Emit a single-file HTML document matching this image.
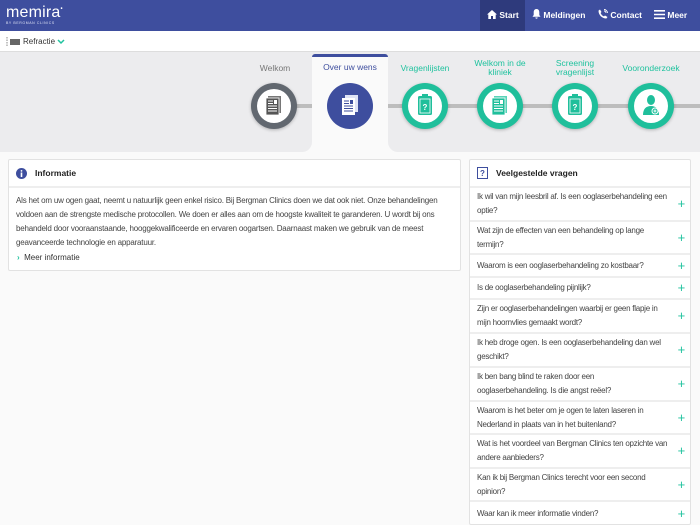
<!DOCTYPE html>
<html><head><meta charset="utf-8"><style>
*{box-sizing:border-box;margin:0;padding:0}
body{width:700px;height:525px;overflow:hidden;background:#fafafa;font-family:"Liberation Sans",sans-serif;color:#333;position:relative}
.hdr{position:absolute;left:0;top:0;width:700px;height:31px;background:#3e4e9e}
.logo{position:absolute;left:6px;top:4px;color:#fff;font-size:16px;letter-spacing:0.2px}
.logo small{position:absolute;left:0;top:17px;font-size:3.5px;letter-spacing:0.6px;white-space:nowrap;color:#dfe3f5}
.nav{position:absolute;top:0;height:31px;color:#fff;font-size:8.5px;font-weight:bold;line-height:31px;white-space:nowrap}
.sub{position:absolute;left:0;top:31px;width:700px;height:21px;background:#fff;border-bottom:1px solid #ddd;font-size:8px;line-height:21px}
.band{position:absolute;left:0;top:52px;width:700px;height:100px;background:#ececee}
.tab{position:absolute;left:312px;top:54px;width:76px;height:98px;background:#fafafa;border-top:3px solid #3e4e9e;border-radius:3px 3px 0 0}
.lbl{position:absolute;font-size:8.5px;text-align:center;width:80px;line-height:9px}
.c{position:absolute;width:46px;height:46px;border-radius:50%;top:83px;box-shadow:0 1px 3px rgba(0,0,0,.25)}
.c i{position:absolute;left:6px;top:6px;width:34px;height:34px;border-radius:50%;background:#fff}
.card{position:absolute;background:#fff;border:1px solid #e2e2e2;border-radius:2px}
.ch{height:28px;border-bottom:2px solid #eee;font-size:8.5px;font-weight:bold;line-height:27px;padding-left:26px;position:relative;color:#222}
.p{font-size:8px;letter-spacing:-0.2px;line-height:14px;color:#444;padding:6px 7px;white-space:nowrap}
.q{position:absolute;left:0;width:220px;border-bottom:2px solid #eee;font-size:8px;letter-spacing:-0.25px;line-height:14px;color:#444;padding-left:7px;white-space:nowrap;display:flex;align-items:center}
.q b{position:absolute;right:5px;color:#1fc29e;font-size:13px;font-weight:normal}
</style></head><body>
<div class="hdr">
 <div class="logo">memira<sup style="font-size:6px">•</sup><small>BY BERGMAN CLINICS</small></div>
 <div style="position:absolute;left:480px;top:0;width:45px;height:31px;background:#2e3a7c"></div>
 <div class="nav" style="left:487px"><svg width="10" height="9" viewBox="0 0 10 9" style="vertical-align:-1px"><path d="M5 0L0 4.5h1.3V9h2.7V6h2v3h2.7V4.5H10z" fill="#fff"/></svg> Start</div>
 <div class="nav" style="left:532px"><svg width="9" height="10" viewBox="0 0 9 10" style="vertical-align:-1px"><path d="M4.5 0C2.5 0 1.7 1.6 1.7 3.5V6L0.5 7.8h8L7.3 6V3.5C7.3 1.6 6.5 0 4.5 0zM3.3 8.5a1.2 1.2 0 0 0 2.4 0z" fill="#fff"/></svg> Meldingen</div>
 <div class="nav" style="left:598px"><svg width="10" height="10" viewBox="0 0 10 10" style="vertical-align:-1px"><path d="M2 0.5L3.5 3 2.6 4a6 6 0 0 0 3.4 3.4l1-.9L9.5 8 8.4 9.5C4 9.5.5 6 .5 1.6z" fill="#fff"/><path d="M6 .5a3.5 3.5 0 0 1 3.5 3.5M6 2a2 2 0 0 1 2 2" stroke="#fff" fill="none" stroke-width=".9"/></svg> Contact</div>
 <div class="nav" style="left:654px"><svg width="11" height="9" viewBox="0 0 11 9" style="vertical-align:-1px"><path d="M0 .8h11M0 4.5h11M0 8.2h11" stroke="#fff" stroke-width="1.6"/></svg> Meer</div>
</div>
<div class="sub"><svg width="14" height="10" viewBox="0 0 14 10" style="position:absolute;left:6px;top:6px"><path d="M1 0v10" stroke="#888" stroke-dasharray="1.5 1"/><rect x="4" y="2" width="10" height="6" fill="#666"/></svg><span style="position:absolute;left:23px">Refractie</span><svg width="8" height="6" style="position:absolute;left:57px;top:8px"><path d="M1 1l3 3 3-3" stroke="#1fc29e" stroke-width="1.5" fill="none"/></svg></div>
<div class="band"></div>
<div style="position:absolute;left:270px;top:104px;width:430px;height:4px;background:#bdbdbd"></div>
<div style="position:absolute;left:0;top:152px;width:700px;height:373px;background:#fafafa"></div>
<div style="position:absolute;left:300px;top:140px;width:12px;height:12px;background:#fafafa"></div>
<div style="position:absolute;left:388px;top:140px;width:12px;height:12px;background:#fafafa"></div>
<div style="position:absolute;left:388px;top:140px;width:12px;height:12px;background:#ececee;border-bottom-left-radius:10px"></div>
<div style="position:absolute;left:300px;top:140px;width:12px;height:12px;background:#ececee;border-bottom-right-radius:10px"></div>
<div class="tab"></div>

<div class="lbl" style="left:235px;top:64px;color:#777">Welkom</div>
<div class="lbl" style="left:310px;top:63px;color:#3e4e9e">Over uw wens</div>
<div class="lbl" style="left:385px;top:64px;color:#1fc29e">Vragenlijsten</div>
<div class="lbl" style="left:460px;top:59px;color:#1fc29e">Welkom in de<br>kliniek</div>
<div class="lbl" style="left:535px;top:59px;color:#1fc29e">Screening<br>vragenlijst</div>
<div class="lbl" style="left:611px;top:64px;color:#1fc29e">Vooronderzoek</div>

<div class="c" style="left:251px;background:#626870"><i></i><svg style="position:absolute;left:14px;top:13px" width="18" height="20" viewBox="0 0 18 20"><rect x="3" y="0" width="13" height="17" fill="#777"/><rect x="1" y="2" width="13" height="17" fill="#555" stroke="#fff" stroke-width=".8"/><path d="M3 5h5M3 7.5h5M3 10h9M3 12.5h9M3 15h9" stroke="#fff" stroke-width="1"/><rect x="9" y="4" width="3" height="4" fill="#fff"/></svg></div>
<div class="c" style="left:327px;background:#3e4e9e;box-shadow:none"><svg style="position:absolute;left:14px;top:12px" width="18" height="21" viewBox="0 0 18 21"><rect x="4" y="0" width="13" height="17" fill="#dfe3f5"/><rect x="1" y="3" width="13" height="17" fill="#fff"/><path d="M3 6h5M3 8.5h5M3 11h9M3 13.5h9M3 16h9" stroke="#3e4e9e" stroke-width="1"/><rect x="9" y="5" width="3" height="4" fill="#3e4e9e"/></svg></div>
<div class="c" style="left:402px;background:#1fbf9b"><i></i><svg style="position:absolute;left:15px;top:11px" width="16" height="22" viewBox="0 0 16 22"><rect x="1" y="2" width="14" height="19" rx="1.5" fill="#1fbf9b"/><rect x="5" y="0" width="6" height="4" fill="#1fbf9b"/><rect x="3" y="5" width="10" height="14" fill="none" stroke="#fff" stroke-width=".8"/><text x="8" y="16" font-size="8" font-weight="bold" fill="#fff" text-anchor="middle" font-family="Liberation Sans">?</text></svg></div>
<div class="c" style="left:477px;background:#1fbf9b"><i></i><svg style="position:absolute;left:14px;top:13px" width="18" height="20" viewBox="0 0 18 20"><rect x="3" y="0" width="13" height="17" fill="#58d3b8"/><rect x="1" y="2" width="13" height="17" fill="#1fbf9b" stroke="#fff" stroke-width=".8"/><path d="M3 5h5M3 7.5h5M3 10h9M3 12.5h9M3 15h9" stroke="#fff" stroke-width="1"/><rect x="9" y="4" width="3" height="4" fill="#fff"/></svg></div>
<div class="c" style="left:552px;background:#1fbf9b"><i></i><svg style="position:absolute;left:15px;top:11px" width="16" height="22" viewBox="0 0 16 22"><rect x="1" y="2" width="14" height="19" rx="1.5" fill="#1fbf9b"/><rect x="5" y="0" width="6" height="4" fill="#1fbf9b"/><rect x="3" y="5" width="10" height="14" fill="none" stroke="#fff" stroke-width=".8"/><text x="8" y="16" font-size="8" font-weight="bold" fill="#fff" text-anchor="middle" font-family="Liberation Sans">?</text></svg></div>
<div class="c" style="left:628px;background:#1fbf9b"><i></i><svg style="position:absolute;left:13px;top:11px" width="20" height="22" viewBox="0 0 20 22"><ellipse cx="10" cy="6" rx="4" ry="5" fill="#1fbf9b"/><path d="M2 21c0-6 3-9 8-9s8 3 8 9z" fill="#1fbf9b"/><circle cx="14" cy="17" r="3" fill="#1fbf9b" stroke="#fff"/><path d="M14 15.5v3M12.5 17h3" stroke="#fff"/></svg></div>

<div class="card" style="left:8px;top:159px;width:453px;height:112px">
 <div class="ch"><svg width="11" height="11" style="position:absolute;left:7px;top:8px"><circle cx="5.5" cy="5.5" r="5.5" fill="#3e4e9e"/><rect x="4.7" y="4.5" width="1.6" height="4.5" fill="#fff"/><circle cx="5.5" cy="2.9" r=".9" fill="#fff"/></svg>Informatie</div>
 <div class="p">Als het om uw ogen gaat, neemt u natuurlijk geen enkel risico. Bij Bergman Clinics doen we dat ook niet. Onze behandelingen<br>voldoen aan de strengste medische protocollen. We doen er alles aan om de hoogste kwaliteit te garanderen. U wordt bij ons<br>behandeld door vooraanstaande, hooggekwalificeerde en ervaren oogartsen. Daarnaast maken we gebruik van de meest<br>geavanceerde technologie en apparatuur.</div>
 <div style="position:absolute;left:8px;top:93px;font-size:8px;color:#333"><span style="color:#1fc29e;font-weight:bold">›</span>&nbsp; Meer informatie</div>
</div>

<div class="card" style="left:469px;top:159px;width:222px;height:366px">
 <div class="ch"><svg width="11" height="12" style="position:absolute;left:7px;top:7px"><rect x=".5" y=".5" width="10" height="11" fill="none" stroke="#3e4e9e"/><text x="5.5" y="9" font-size="8" fill="#3e4e9e" text-anchor="middle" font-family="Liberation Sans">?</text></svg>Veelgestelde vragen</div>
 <div class="q" style="top:28px;height:34px">Ik wil van mijn leesbril af. Is een ooglaserbehandeling een<br>optie?<b>+</b></div>
 <div class="q" style="top:62px;height:33px">Wat zijn de effecten van een behandeling op lange<br>termijn?<b>+</b></div>
 <div class="q" style="top:95px;height:23px">Waarom is een ooglaserbehandeling zo kostbaar?<b>+</b></div>
 <div class="q" style="top:118px;height:22px">Is de ooglaserbehandeling pijnlijk?<b>+</b></div>
 <div class="q" style="top:140px;height:34px">Zijn er ooglaserbehandelingen waarbij er geen flapje in<br>mijn hoornvlies gemaakt wordt?<b>+</b></div>
 <div class="q" style="top:174px;height:34px">Ik heb droge ogen. Is een ooglaserbehandeling dan wel<br>geschikt?<b>+</b></div>
 <div class="q" style="top:208px;height:34px">Ik ben bang blind te raken door een<br>ooglaserbehandeling. Is die angst reëel?<b>+</b></div>
 <div class="q" style="top:242px;height:33px">Waarom is het beter om je ogen te laten laseren in<br>Nederland in plaats van in het buitenland?<b>+</b></div>
 <div class="q" style="top:275px;height:34px">Wat is het voordeel van Bergman Clinics ten opzichte van<br>andere aanbieders?<b>+</b></div>
 <div class="q" style="top:309px;height:33px">Kan ik bij Bergman Clinics terecht voor een second<br>opinion?<b>+</b></div>
 <div class="q" style="top:342px;height:23px;border-bottom:none">Waar kan ik meer informatie vinden?<b>+</b></div>
</div>
</body></html>
